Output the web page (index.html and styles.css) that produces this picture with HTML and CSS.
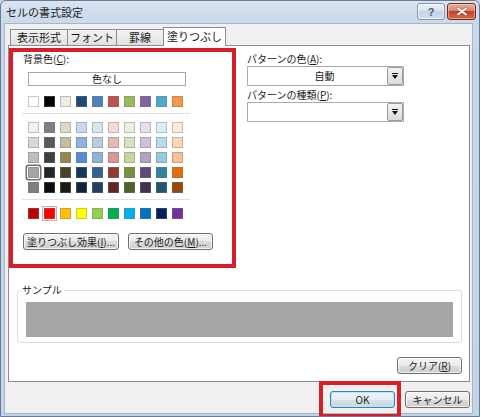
FILE: index.html
```html
<!DOCTYPE html>
<html lang="ja">
<head>
<meta charset="utf-8">
<title>セルの書式設定</title>
<link rel="stylesheet" href="styles.css">
</head>
<body>
<div class="window">
  <div class="titlebar">
    <span class="title">セルの書式設定</span>
    <div class="caption-btns">
      <div class="cap-btn help">?</div>
      <div class="cap-btn close">
        <svg width="12" height="9" viewBox="0 0 12 9"><path d="M2 1.5 L10 7.5 M10 1.5 L2 7.5" stroke="#5a1a10" stroke-width="3" stroke-linecap="round" opacity="0.35"/><path d="M2 1.5 L10 7.5 M10 1.5 L2 7.5" stroke="#fff" stroke-width="2" stroke-linecap="round"/></svg>
      </div>
    </div>
  </div>
  <div class="client">
    <div class="tabs">
      <div class="tab t1">表示形式</div>
      <div class="tab t2">フォント</div>
      <div class="tab t3">罫線</div>
      <div class="tab active">塗りつぶし</div>
    </div>
    <div class="panel">
      <div class="top">
        <div class="bg-section">
          <div class="label">背景色(<u>C</u>):</div>
          <div class="nocolor">色なし</div>
          <div class="swatch-row theme">
            <span class="sw" style="background:#ffffff"></span>
            <span class="sw" style="background:#000000"></span>
            <span class="sw" style="background:#eeece1"></span>
            <span class="sw" style="background:#1f497d"></span>
            <span class="sw" style="background:#4f81bd"></span>
            <span class="sw" style="background:#c0504d"></span>
            <span class="sw" style="background:#9bbb59"></span>
            <span class="sw" style="background:#8064a2"></span>
            <span class="sw" style="background:#4bacc6"></span>
            <span class="sw" style="background:#f79646"></span>
          </div>
          <div class="sep"></div>
          <div class="grid">
            <span class="sw" style="background:#f2f2f2"></span>
            <span class="sw" style="background:#7f7f7f"></span>
            <span class="sw" style="background:#ddd9c3"></span>
            <span class="sw" style="background:#c6d9f0"></span>
            <span class="sw" style="background:#dbe5f1"></span>
            <span class="sw" style="background:#f2dcdb"></span>
            <span class="sw" style="background:#ebf1dd"></span>
            <span class="sw" style="background:#e5e0ec"></span>
            <span class="sw" style="background:#dbeef3"></span>
            <span class="sw" style="background:#fdeada"></span>

            <span class="sw" style="background:#d8d8d8"></span>
            <span class="sw" style="background:#595959"></span>
            <span class="sw" style="background:#c4bd97"></span>
            <span class="sw" style="background:#8db3e2"></span>
            <span class="sw" style="background:#b8cce4"></span>
            <span class="sw" style="background:#e5b9b7"></span>
            <span class="sw" style="background:#d7e3bc"></span>
            <span class="sw" style="background:#ccc1d9"></span>
            <span class="sw" style="background:#b7dde8"></span>
            <span class="sw" style="background:#fbd5b5"></span>

            <span class="sw" style="background:#bfbfbf"></span>
            <span class="sw" style="background:#3f3f3f"></span>
            <span class="sw" style="background:#938953"></span>
            <span class="sw" style="background:#548dd4"></span>
            <span class="sw" style="background:#95b3d7"></span>
            <span class="sw" style="background:#d99694"></span>
            <span class="sw" style="background:#c3d69b"></span>
            <span class="sw" style="background:#b2a2c7"></span>
            <span class="sw" style="background:#92cddc"></span>
            <span class="sw" style="background:#fac08f"></span>

            <span class="sw selected" style="background:#a5a5a5"></span>
            <span class="sw" style="background:#262626"></span>
            <span class="sw" style="background:#494429"></span>
            <span class="sw" style="background:#17365d"></span>
            <span class="sw" style="background:#366092"></span>
            <span class="sw" style="background:#953734"></span>
            <span class="sw" style="background:#76923c"></span>
            <span class="sw" style="background:#5f497a"></span>
            <span class="sw" style="background:#31859b"></span>
            <span class="sw" style="background:#e36c09"></span>

            <span class="sw" style="background:#7f7f7f"></span>
            <span class="sw" style="background:#0c0c0c"></span>
            <span class="sw" style="background:#1d1b10"></span>
            <span class="sw" style="background:#0f243e"></span>
            <span class="sw" style="background:#244061"></span>
            <span class="sw" style="background:#632423"></span>
            <span class="sw" style="background:#4f6128"></span>
            <span class="sw" style="background:#3f3151"></span>
            <span class="sw" style="background:#205867"></span>
            <span class="sw" style="background:#974806"></span>
          </div>
          <div class="sep"></div>
          <div class="swatch-row std">
            <span class="sw" style="background:#c00000"></span>
            <span class="sw hot" style="background:#ff0000"></span>
            <span class="sw" style="background:#ffc000"></span>
            <span class="sw" style="background:#ffff00"></span>
            <span class="sw" style="background:#92d050"></span>
            <span class="sw" style="background:#00b050"></span>
            <span class="sw" style="background:#00b0f0"></span>
            <span class="sw" style="background:#0070c0"></span>
            <span class="sw" style="background:#002060"></span>
            <span class="sw" style="background:#7030a0"></span>
          </div>
          <div class="btn-row">
            <button class="btn fx">塗りつぶし効果(<u>I</u>)...</button>
            <button class="btn more">その他の色(<u>M</u>)...</button>
          </div>
        </div>
        <div class="pattern">
          <div class="label">パターンの色(<u>A</u>):</div>
          <div class="combo"><span class="combo-text">自動</span><span class="arrow"><span class="tri"></span></span></div>
          <div class="label second">パターンの種類(<u>P</u>):</div>
          <div class="combo"><span class="combo-text"></span><span class="arrow"><span class="tri"></span></span></div>
        </div>
      </div>
      <div class="sample">
        <span class="legend">サンプル</span>
        <div class="sample-fill"></div>
      </div>
      <div class="clear-row"><button class="btn">クリア(<u>R</u>)</button></div>
    </div>
    <div class="footer">
      <button class="btn ok">OK</button>
      <button class="btn">キャンセル</button>
    </div>
  </div>
  <div class="mark"></div>
</div>
</body>
</html>
```

FILE: styles.css
```css
* { box-sizing: border-box; }
html, body { margin: 0; padding: 0; background: #c6d6ea; }
body { font-family: "Noto Sans CJK JP", "Noto Sans", sans-serif; font-size: 10px; color: #1a1a1a; }

.window {
  position: relative;
  width: 480px;
  height: 417px;
  border: 1px solid #6b7b91;
  border-radius: 6px 6px 0 0;
  background: linear-gradient(#d9e4f1 0px, #c8d7ea 24px, #c3d4e9 100%);
  display: flex;
  flex-direction: column;
  overflow: hidden;
}

.titlebar {
  height: 23px;
  flex: none;
  display: flex;
  align-items: flex-start;
  justify-content: space-between;
  padding-left: 5px;
}
.title { font-size: 11px; line-height: 20px; margin-top: 1px; color: #1e1e1e; }
.caption-btns { display: flex; gap: 2px; margin-top: 2px; margin-right: 3px; }
.cap-btn {
  height: 17px;
  border-radius: 3px;
  display: flex; align-items: center; justify-content: center;
}
.help {
  width: 28px;
  border: 1px solid #8595ab;
  background: linear-gradient(#eef3fa 0%, #d5e0ee 50%, #c3d3e8 50%, #d2def0 100%);
  color: #4f5e75; font-weight: bold; font-size: 11px; font-family: "Liberation Sans", sans-serif;
  box-shadow: inset 0 0 0 1px rgba(255,255,255,0.6);
}
.close {
  width: 29px;
  border: 1px solid #73291d;
  background: linear-gradient(#eab0a2 0%, #d98069 50%, #c5432a 50%, #d3694c 100%);
  box-shadow: inset 0 0 0 1px rgba(255,220,210,0.5);
}

.client {
  flex: 1;
  margin: 0 7px 3px 4px;
  background: #f0f0f0;
  box-shadow: 0 0 0 1px #a6b6ca;
  padding: 3px 2px 0 3px;
  display: flex;
  flex-direction: column;
}

.tabs { display: flex; align-items: flex-end; height: 18px; padding-left: 2px; }
.tab {
  height: 16px;
  border: 1px solid #898c95;
  border-bottom: none;
  background: linear-gradient(#f4f4f4, #e1e1e1);
  font-size: 11px;
  line-height: 15px;
  text-align: center;
}
.t1 { width: 58px; }
.t2 { width: 49px; border-left: none; }
.t3 { width: 47px; border-left: none; }
.tab.active {
  width: 63px; height: 19px; margin-left: -1px; margin-bottom: -1px;
  background: #fff; position: relative; z-index: 1; line-height: 17px;
}

.panel {
  height: 337px;
  flex: none;
  border: 1px solid #898c95;
  background: #fff;
  padding-top: 2px;
  display: flex;
  flex-direction: column;
}
.top { display: flex; }

.bg-section {
  width: 227px;
  height: 220px;
  border: 4px solid #d81e2b;
  padding-left: 10px;
}
.label { line-height: 12px; margin-top: 1px; }
.nocolor {
  margin: 7px 0 0 5px;
  width: 158px; height: 14px;
  border: 1px solid #a7a7a7;
  text-align: center;
  line-height: 12px;
}
.swatch-row { display: flex; gap: 5px; margin-left: 5px; }
.theme { margin-top: 10px; }
.std { margin-top: 8px; }
.sw {
  display: block;
  width: 11px; height: 11px;
  border: 1px solid rgba(120,120,120,0.4);
}
.sep { margin: 6px 0 0 -1px; width: 168px; height: 1px; background: #e2e2e2; }
.grid {
  display: grid;
  grid-template-columns: repeat(10, 11px);
  column-gap: 5px;
  row-gap: 4px;
  margin: 8px 0 0 5px;
}
.sw.selected { border-radius: 1px; box-shadow: 0 0 0 1px #fff, 0 0 0 2.5px #727272; }
.sw.hot { box-shadow: 0 0 0 1px #fff, 0 0 0 2px #d9a9a9; }

.btn-row { display: flex; gap: 9px; margin-top: 14px; }
.btn {
  font-family: inherit; font-size: 10px; color: #1a1a1a;
  height: 17px; padding: 0; line-height: 14px;
  border: 1px solid #707070; border-radius: 3px;
  background: linear-gradient(#f3f3f3 0%, #ebebeb 50%, #dcdcdc 50%, #cfcfcf 100%);
  box-shadow: inset 0 0 0 1px rgba(255,255,255,0.7);
}
.fx { width: 96px; }
.more { width: 85px; }

.pattern { margin-left: 11px; padding-top: 4px; width: 157px; }
.label.second { margin-top: 3px; }
.combo {
  margin-top: 1px;
  height: 20px;
  border: 1px solid #a9abb2;
  display: flex;
  background: #fff;
}
.combo-text { flex: 1; text-align: center; line-height: 18px; padding-left: 14px; }
.arrow {
  width: 16px; height: 18px;
  border: 1px solid #9a9a9a; border-radius: 2px;
  background: linear-gradient(#f3f3f3, #dcdcdc);
  display: flex; align-items: center; justify-content: center;
}
.tri {
  width: 0; height: 0;
  border-left: 3.5px solid transparent;
  border-right: 3.5px solid transparent;
  border-top: 4px solid #111;
  margin-top: 2px;
  position: relative;
}
.tri::before {
  content: ""; position: absolute; left: -3px; top: -6px; width: 6px; height: 1px; background: #111;
}

.sample {
  position: relative;
  margin: 22px 7px 0 8px;
  border: 1px solid #d5dde3;
  border-radius: 3px;
  padding: 11px 8px 5px 8px;
}
.legend {
  position: absolute; top: -7px; left: 2px;
  background: #fff; padding: 0 2px; line-height: 12px;
}
.sample-fill { height: 35px; background: #a6a6a6; }

.clear-row { display: flex; justify-content: flex-end; margin-top: 14px; padding-right: 7px; }
.clear-row .btn { width: 65px; }

.footer { display: flex; justify-content: flex-end; gap: 10px; margin-top: 9px; }
.footer .btn { width: 65px; }
.btn.ok {
  border-color: #3c7fb1;
  box-shadow: inset 0 0 0 1px #bfe3f8;
  background: linear-gradient(#f0f6fa 0%, #e6eef3 50%, #d6e1e8 50%, #cbd8e1 100%);
}

.mark {
  position: absolute;
  left: 318px; top: 380px;
  width: 82px; height: 37px;
  border: 4px solid #d81e2b;
}
```
